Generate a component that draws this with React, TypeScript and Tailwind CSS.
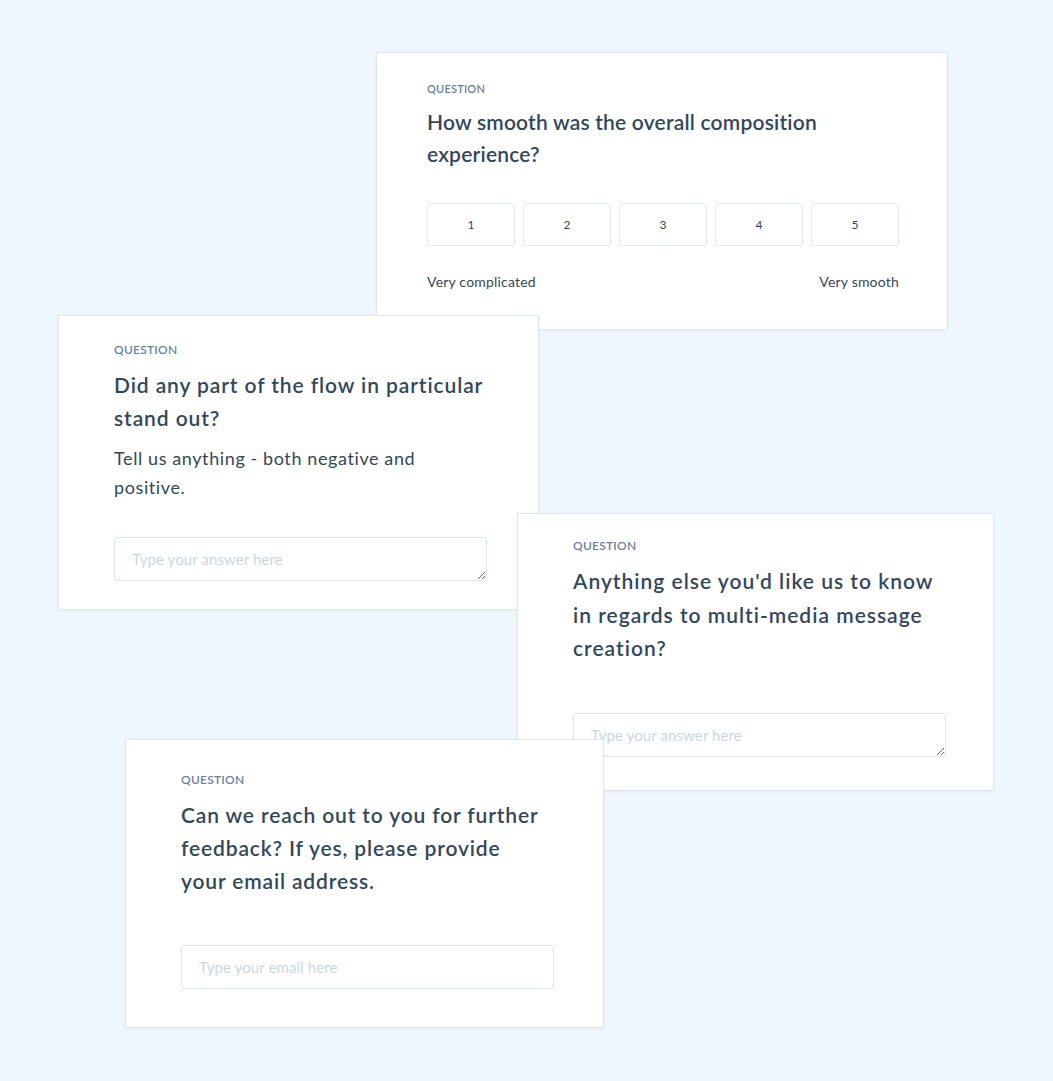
const font = { fontFamily: "Lato, 'Noto Sans', sans-serif" };

function Label({ small }: { small?: boolean }) {
  return (
    <div
      className={`${small ? "text-[11px]" : "text-[12px]"} font-semibold uppercase leading-4 tracking-[0.02em] text-[#6b819b]`}
    >
      Question
    </div>
  );
}

function Answer({ placeholder, multiline }: { placeholder: string; multiline?: boolean }) {
  const cls =
    "block h-[44px] w-[373px] rounded-[3px] border border-[#dfe3eb] bg-white px-[17px] py-[11px] text-[15px] leading-5 tracking-[0.1px] text-[#33475b] outline-none placeholder:text-[#ccd6e1]";
  return multiline ? (
    <textarea rows={1} placeholder={placeholder} className={cls} style={font} />
  ) : (
    <input type="email" placeholder={placeholder} className={cls} style={font} />
  );
}

export default function App() {
  return (
    <div className="relative h-[1081px] w-full overflow-hidden bg-[#f0f6fe] text-[#33475b]" style={font}>
      {/* rating card */}
      <div className="absolute left-[376px] top-[52px] h-[278px] w-[572px] border border-[#e1e6ed] bg-white pl-[50px] pr-[48px] pt-[28px] shadow-[0_1px_3px_rgba(45,62,80,0.06)]">
        <Label small />
        <h2 className="mt-[9px] text-[21px] font-semibold leading-[32px] tracking-[0.2px]">
          How smooth was the overall composition
          <br />
          experience?
        </h2>
        <div className="mt-[33px] flex gap-[8px]">
          {[1, 2, 3, 4, 5].map((n) => (
            <div
              key={n}
              className="flex h-[43px] flex-1 items-center justify-center rounded-[3px] border border-[#e5eaf0] text-[12px] text-[#33475b]"
            >
              {n}
            </div>
          ))}
        </div>
        <div className="mt-[26px] flex justify-between text-[14px] leading-5 tracking-[0.2px]">
          <span>Very complicated</span>
          <span>Very smooth</span>
        </div>
      </div>

      {/* open answer card */}
      <div className="absolute left-[58px] top-[315px] h-[295px] w-[481px] border border-[#e1e6ed] bg-white pl-[55px] pt-[26px] shadow-[0_1px_3px_rgba(45,62,80,0.06)]">
        <Label />
        <h2 className="mt-[10px] text-[21px] font-semibold leading-[33px] tracking-[0.9px]">
          Did any part of the flow in particular
          <br />
          stand out?
        </h2>
        <p className="mt-[10px] text-[18px] leading-[29px] tracking-[0.6px]">
          Tell us anything - both negative and
          <br />
          positive.
        </p>
        <div className="mt-[35px]">
          <Answer placeholder="Type your answer here" multiline />
        </div>
      </div>

      {/* anything else card */}
      <div className="absolute left-[517px] top-[513px] h-[278px] w-[477px] border border-[#e1e6ed] bg-white pl-[55px] pt-[24px] shadow-[0_1px_3px_rgba(45,62,80,0.06)]">
        <Label />
        <h2 className="mt-[10px] text-[21px] font-semibold leading-[33.5px] tracking-[1px]">
          Anything else you'd like us to know
          <br />
          in regards to multi-media message
          <br />
          creation?
        </h2>
        <div className="mt-[48px]">
          <Answer placeholder="Type your answer here" multiline />
        </div>
      </div>

      {/* email card */}
      <div className="absolute left-[125px] top-[739px] h-[289px] w-[479px] border border-[#e1e6ed] bg-white pl-[55px] pt-[32px] shadow-[0_1px_3px_rgba(45,62,80,0.06)]">
        <Label />
        <h2 className="mt-[10px] text-[21px] font-semibold leading-[33px] tracking-[0.85px]">
          Can we reach out to you for further
          <br />
          feedback? If yes, please provide
          <br />
          your email address.
        </h2>
        <div className="mt-[48px]">
          <Answer placeholder="Type your email here" />
        </div>
      </div>
    </div>
  );
}
